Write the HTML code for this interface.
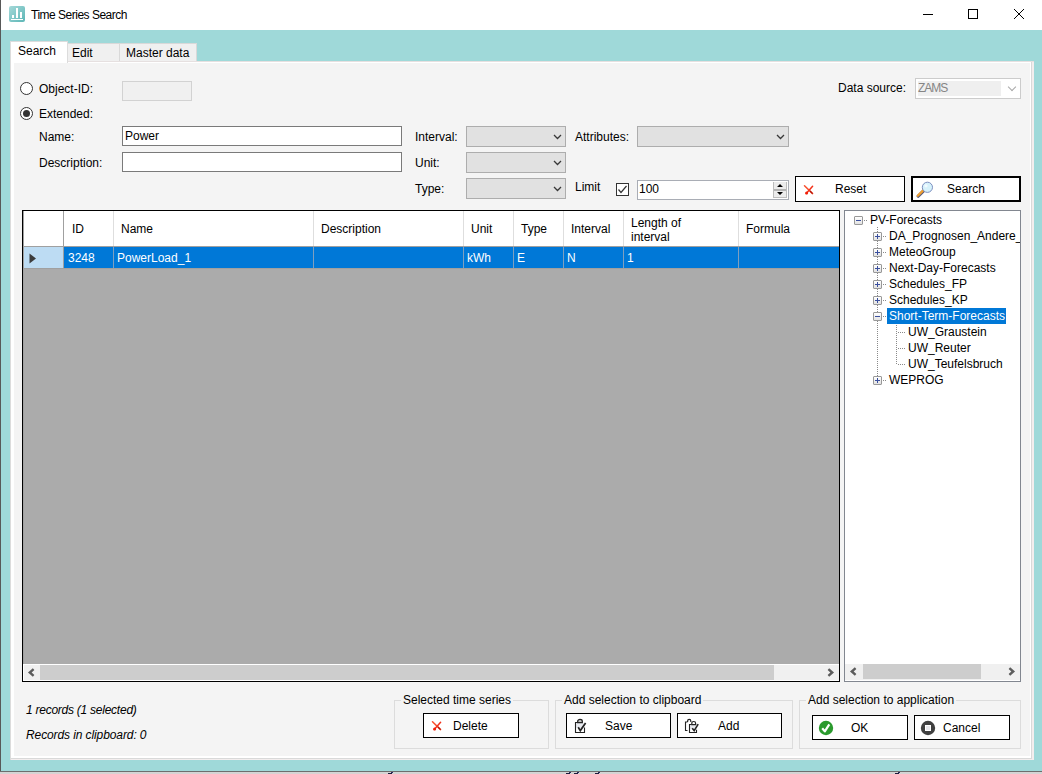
<!DOCTYPE html>
<html><head><meta charset="utf-8">
<style>
*{box-sizing:border-box;margin:0;padding:0}
html,body{width:1042px;height:774px;overflow:hidden}
body{position:relative;background:#9fd9d9;font-family:"Liberation Sans",sans-serif;font-size:12px;color:#000}
.a{position:absolute}
.t{position:absolute;white-space:nowrap;line-height:14px;font-size:12px}
.box{position:absolute;border:1px solid #7a7a7a;background:#fff}
.cmb{position:absolute;border:1px solid #adadad;background:#e1e1e1}
.chev{position:absolute;width:7px;height:7px;border-right:1px solid #5a5a5a;border-bottom:1px solid #5a5a5a;transform:rotate(45deg)}
.btn{position:absolute;border:1px solid #000;background:#fff}
.grp{position:absolute;border:1px solid #dcdcdc}
</style></head><body>

<!-- title bar -->
<div class="a" style="left:0;top:0;width:1042px;height:30px;background:#fff"></div>
<div class="a" style="left:0;top:0;width:1px;height:772px;background:#585858"></div>
<div class="a" style="left:9px;top:6px;width:16px;height:16px;border-radius:2px;background:linear-gradient(135deg,#a6d9d9,#5cb6b6)"></div>
<div class="a" style="left:12px;top:15px;width:2px;height:3px;background:#fff"></div>
<div class="a" style="left:16px;top:8px;width:2px;height:10px;background:#fff"></div>
<div class="a" style="left:20px;top:12px;width:2px;height:6px;background:#fff"></div>
<div class="a" style="left:11px;top:19px;width:12px;height:1px;background:#fff"></div>
<div class="t" style="left:31px;top:8px;letter-spacing:-0.5px">Time Series Search</div>
<div class="a" style="left:923px;top:14px;width:10px;height:1px;background:#000"></div>
<div class="a" style="left:968px;top:9px;width:10px;height:10px;border:1px solid #000"></div>
<svg class="a" style="left:1013px;top:8px" width="12" height="12"><path d="M1 1L11 11M11 1L1 11" stroke="#000" stroke-width="1"/></svg>

<!-- bottom edge -->
<div class="a" style="left:0;top:771px;width:1042px;height:1px;background:#6e6e6e"></div>
<div class="a" style="left:0;top:772px;width:1042px;height:2px;background:#d4d4d4"></div>

<!-- tabs -->
<div class="a" style="left:67px;top:43px;width:53px;height:19px;background:#f0f0f0;border:1px solid #d9d9d9;border-bottom:none"></div>
<div class="a" style="left:119px;top:43px;width:78px;height:19px;background:#f0f0f0;border:1px solid #d9d9d9;border-bottom:none"></div>
<div class="t" style="left:72px;top:46px">Edit</div>
<div class="t" style="left:126px;top:46px">Master data</div>

<!-- panel -->
<div class="a" style="left:10px;top:61px;width:1024px;height:699px;background:#f3eeee;border-top:1px solid #e6e0e0;border-left:1px solid #dcdcdc"></div>
<div class="a" style="left:11px;top:62px;width:1021px;height:697px;background:#d9d9d9"></div>
<div class="a" style="left:11px;top:62px;width:1020px;height:696px;background:#fff"></div>
<div class="a" style="left:14px;top:63px;width:1016px;height:693px;background:#f4f4f4"></div>
<!-- selected tab -->
<div class="a" style="left:10px;top:41px;width:58px;height:22px;background:#fff;border:1px solid #dcdcdc;border-bottom:none"></div>
<div class="t" style="left:18px;top:44px">Search</div>


<!-- form -->
<div class="a" style="left:20px;top:82px;width:13px;height:13px;border:1px solid #333;border-radius:50%;background:#fff"></div>
<div class="t" style="left:39px;top:82px">Object-ID:</div>
<div class="a" style="left:122px;top:81px;width:70px;height:20px;border:1px solid #d2d2d2;background:#f0f0f0"></div>
<div class="a" style="left:20px;top:107px;width:13px;height:13px;border:1px solid #333;border-radius:50%;background:#fff"></div>
<div class="a" style="left:23px;top:110px;width:7px;height:7px;border-radius:50%;background:#333"></div>
<div class="t" style="left:39px;top:107px">Extended:</div>
<div class="t" style="left:39px;top:130px">Name:</div>
<div class="box" style="left:122px;top:126px;width:280px;height:20px"></div>
<div class="t" style="left:125px;top:129px">Power</div>
<div class="t" style="left:39px;top:156px">Description:</div>
<div class="box" style="left:122px;top:152px;width:280px;height:20px"></div>

<div class="t" style="left:415px;top:130px">Interval:</div>
<div class="cmb" style="left:466px;top:126px;width:100px;height:21px"></div>
<svg class="a" style="left:553px;top:134px" width="10" height="6"><path d="M1 1L4.5 4.5L8 1" fill="none" stroke="#383838" stroke-width="1.3"/></svg>
<div class="t" style="left:415px;top:156px">Unit:</div>
<div class="cmb" style="left:466px;top:152px;width:100px;height:21px"></div>
<svg class="a" style="left:553px;top:160px" width="10" height="6"><path d="M1 1L4.5 4.5L8 1" fill="none" stroke="#383838" stroke-width="1.3"/></svg>
<div class="t" style="left:415px;top:182px">Type:</div>
<div class="cmb" style="left:466px;top:178px;width:100px;height:21px"></div>
<svg class="a" style="left:553px;top:186px" width="10" height="6"><path d="M1 1L4.5 4.5L8 1" fill="none" stroke="#383838" stroke-width="1.3"/></svg>

<div class="t" style="left:575px;top:130px">Attributes:</div>
<div class="cmb" style="left:637px;top:126px;width:152px;height:21px"></div>
<svg class="a" style="left:776px;top:134px" width="10" height="6"><path d="M1 1L4.5 4.5L8 1" fill="none" stroke="#383838" stroke-width="1.3"/></svg>
<div class="t" style="left:575px;top:180px">Limit</div>
<div class="a" style="left:616px;top:183px;width:13px;height:13px;border:1px solid #333;background:#fff"></div>
<svg class="a" style="left:616px;top:183px" width="13" height="13"><path d="M2.5 6.5L5 9.5L10.5 3" fill="none" stroke="#333" stroke-width="1.2"/></svg>
<div class="a" style="left:637px;top:180px;width:152px;height:20px;border:1px solid #a9adb5;background:#fff"></div>
<div class="t" style="left:639px;top:182px">100</div>
<div class="a" style="left:773px;top:182px;width:14px;height:16px;background:#ececec;border:1px solid #bdbdbd;border-top:none"></div>
<div class="a" style="left:774px;top:189px;width:12px;height:2px;background:#b4b4b4"></div>
<svg class="a" style="left:773px;top:182px" width="14" height="16"><path d="M4 5L7 2L10 5Z M4 10L7 13L10 10Z" fill="#000"/></svg>

<div class="btn" style="left:795px;top:176px;width:110px;height:26px"></div>
<svg class="a" style="left:803px;top:184px" width="12" height="12"><path d="M1.5 1.8L9.6 9.6" stroke="#f8502e" stroke-width="1.5" stroke-linecap="round"/><path d="M9.6 2.3L3.2 9.4" stroke="#f3321a" stroke-width="1.5" stroke-linecap="round"/><circle cx="3.6" cy="9" r="1.5" fill="#f01e08"/><path d="M7 7L9.6 9.6" stroke="#b01208" stroke-width="1.2"/></svg>
<div class="t" style="left:835px;top:182px">Reset</div>
<div class="btn" style="left:911px;top:176px;width:110px;height:26px;border:2px solid #000"></div>
<svg class="a" style="left:916px;top:179px" width="18" height="20"><path d="M7.6 11.8L2.2 17.2" stroke="#5a5a7a" stroke-width="3.2" stroke-linecap="round"/><path d="M7.2 11.4L1.8 16.8" stroke="#f0a030" stroke-width="2.2" stroke-linecap="round"/><circle cx="11.4" cy="8.3" r="5.1" fill="#d6f2fb" stroke="#7d8fc0" stroke-width="1"/><circle cx="10" cy="6.8" r="1.6" fill="#f2fbff"/></svg>
<div class="t" style="left:947px;top:182px">Search</div>

<div class="t" style="left:838px;top:81px">Data source:</div>
<div class="a" style="left:915px;top:78px;width:106px;height:21px;border:1px solid #cccccc;background:#fff"></div>
<div class="a" style="left:918px;top:81px;width:83px;height:15px;background:#efefef"></div>
<div class="t" style="left:918px;top:81px;color:#858585;letter-spacing:-1px">ZAMS</div>
<div class="chev" style="left:1009px;top:84px;width:6px;height:6px;border-color:#a8a8a8"></div>


<!-- grid -->
<div class="a" style="left:22px;top:210px;width:818px;height:472px;border:1px solid #000;background:#ababab"></div>
<div class="a" style="left:23px;top:211px;width:816px;height:35px;background:#fff"></div>
<div class="a" style="left:23px;top:246px;width:816px;height:1px;background:#a0a0a0"></div>
<div class="a" style="left:24px;top:247px;width:39px;height:21px;background:#bddcf3"></div>
<div class="a" style="left:64px;top:247px;width:775px;height:21px;background:#0078d7"></div>
<div class="a" style="left:23px;top:268px;width:816px;height:1px;background:#a0a0a0"></div>
<div class="a" style="left:23px;top:211px;width:1px;height:453px;background:#a0a0a0"></div>
<div class="a" style="left:63px;top:211px;width:1px;height:57px;background:#a0a0a0"></div>
<div class="a" style="left:113px;top:211px;width:1px;height:35px;background:#dedede"></div>
<div class="a" style="left:113px;top:247px;width:1px;height:21px;background:#7f9fbf"></div>
<div class="a" style="left:313px;top:211px;width:1px;height:35px;background:#dedede"></div>
<div class="a" style="left:313px;top:247px;width:1px;height:21px;background:#7f9fbf"></div>
<div class="a" style="left:463px;top:211px;width:1px;height:35px;background:#dedede"></div>
<div class="a" style="left:463px;top:247px;width:1px;height:21px;background:#7f9fbf"></div>
<div class="a" style="left:513px;top:211px;width:1px;height:35px;background:#dedede"></div>
<div class="a" style="left:513px;top:247px;width:1px;height:21px;background:#7f9fbf"></div>
<div class="a" style="left:563px;top:211px;width:1px;height:35px;background:#dedede"></div>
<div class="a" style="left:563px;top:247px;width:1px;height:21px;background:#7f9fbf"></div>
<div class="a" style="left:623px;top:211px;width:1px;height:35px;background:#dedede"></div>
<div class="a" style="left:623px;top:247px;width:1px;height:21px;background:#7f9fbf"></div>
<div class="a" style="left:738px;top:211px;width:1px;height:35px;background:#dedede"></div>
<div class="a" style="left:738px;top:247px;width:1px;height:21px;background:#7f9fbf"></div>
<svg class="a" style="left:29px;top:253px" width="8" height="11"><path d="M0.5 0.5L7 5.5L0.5 10.5Z" fill="#3c3c3c"/></svg>
<div class="t" style="left:72px;top:222px">ID</div>
<div class="t" style="left:121px;top:222px">Name</div>
<div class="t" style="left:321px;top:222px">Description</div>
<div class="t" style="left:471px;top:222px">Unit</div>
<div class="t" style="left:521px;top:222px">Type</div>
<div class="t" style="left:571px;top:222px">Interval</div>
<div class="t" style="left:631px;top:216px">Length of</div>
<div class="t" style="left:631px;top:230px">interval</div>
<div class="t" style="left:746px;top:222px">Formula</div>
<div class="t" style="left:68px;top:251px;color:#fff">3248</div>
<div class="t" style="left:117px;top:251px;color:#fff">PowerLoad_1</div>
<div class="t" style="left:467px;top:251px;color:#fff">kWh</div>
<div class="t" style="left:517px;top:251px;color:#fff">E</div>
<div class="t" style="left:567px;top:251px;color:#fff">N</div>
<div class="t" style="left:627px;top:251px;color:#fff">1</div>
<!-- grid hscroll -->
<div class="a" style="left:23px;top:664px;width:816px;height:17px;background:#fff"></div>
<div class="a" style="left:24px;top:665px;width:815px;height:15px;background:#f0f0f0"></div>
<div class="a" style="left:40px;top:665px;width:734px;height:15px;background:#cdcdcd"></div>
<svg class="a" style="left:26px;top:666px" width="12" height="13"><path d="M7.6 3.2L3.8 6.5L7.6 9.8" fill="none" stroke="#5c5c5c" stroke-width="2.4"/></svg>
<svg class="a" style="left:824px;top:666px" width="12" height="13"><path d="M4.4 3.2L8.2 6.5L4.4 9.8" fill="none" stroke="#5c5c5c" stroke-width="2.4"/></svg>

<!-- tree -->
<div class="a" style="left:844px;top:210px;width:177px;height:472px;border:1px solid #828790;background:#fff"></div>
<div class="a" style="left:845px;top:664px;width:175px;height:16px;background:#f0f0f0"></div>
<div class="a" style="left:863px;top:664px;width:118px;height:15px;background:#cdcdcd"></div>
<svg class="a" style="left:848px;top:665px" width="12" height="13"><path d="M7.6 3.2L3.8 6.5L7.6 9.8" fill="none" stroke="#5c5c5c" stroke-width="2.4"/></svg>
<svg class="a" style="left:1005px;top:665px" width="12" height="13"><path d="M4.4 3.2L8.2 6.5L4.4 9.8" fill="none" stroke="#5c5c5c" stroke-width="2.4"/></svg>


<!-- tree contents -->
<div class="a" style="left:877px;top:227px;width:1px;height:154px;background:repeating-linear-gradient(180deg,#8a8a8a 0 1px,transparent 1px 2px)"></div>
<div class="a" style="left:896px;top:325px;width:1px;height:40px;background:repeating-linear-gradient(180deg,#8a8a8a 0 1px,transparent 1px 2px)"></div>
<div class="a" style="left:854px;top:216px;width:9px;height:9px;border:1px solid #989898;border-radius:1px;background:linear-gradient(180deg,#fff,#e2e2e2)"></div>
<div class="a" style="left:856px;top:220px;width:5px;height:1px;background:#3a4f9e"></div>
<div class="a" style="left:864px;top:220px;width:4px;height:1px;background:repeating-linear-gradient(90deg,#8a8a8a 0 1px,transparent 1px 2px)"></div>
<div class="t" style="left:870px;top:213px">PV-Forecasts</div>
<div class="a" style="left:873px;top:232px;width:9px;height:9px;border:1px solid #989898;border-radius:1px;background:linear-gradient(180deg,#fff,#e2e2e2)"></div>
<div class="a" style="left:875px;top:236px;width:5px;height:1px;background:#3a4f9e"></div>
<div class="a" style="left:877px;top:234px;width:1px;height:5px;background:#3a4f9e"></div>
<div class="a" style="left:883px;top:236px;width:4px;height:1px;background:repeating-linear-gradient(90deg,#8a8a8a 0 1px,transparent 1px 2px)"></div>
<div class="t" style="left:889px;top:229px;width:131px;overflow:hidden">DA_Prognosen_Andere_</div>
<div class="a" style="left:873px;top:248px;width:9px;height:9px;border:1px solid #989898;border-radius:1px;background:linear-gradient(180deg,#fff,#e2e2e2)"></div>
<div class="a" style="left:875px;top:252px;width:5px;height:1px;background:#3a4f9e"></div>
<div class="a" style="left:877px;top:250px;width:1px;height:5px;background:#3a4f9e"></div>
<div class="a" style="left:883px;top:252px;width:4px;height:1px;background:repeating-linear-gradient(90deg,#8a8a8a 0 1px,transparent 1px 2px)"></div>
<div class="t" style="left:889px;top:245px;width:131px;overflow:hidden">MeteoGroup</div>
<div class="a" style="left:873px;top:264px;width:9px;height:9px;border:1px solid #989898;border-radius:1px;background:linear-gradient(180deg,#fff,#e2e2e2)"></div>
<div class="a" style="left:875px;top:268px;width:5px;height:1px;background:#3a4f9e"></div>
<div class="a" style="left:877px;top:266px;width:1px;height:5px;background:#3a4f9e"></div>
<div class="a" style="left:883px;top:268px;width:4px;height:1px;background:repeating-linear-gradient(90deg,#8a8a8a 0 1px,transparent 1px 2px)"></div>
<div class="t" style="left:889px;top:261px;width:131px;overflow:hidden">Next-Day-Forecasts</div>
<div class="a" style="left:873px;top:280px;width:9px;height:9px;border:1px solid #989898;border-radius:1px;background:linear-gradient(180deg,#fff,#e2e2e2)"></div>
<div class="a" style="left:875px;top:284px;width:5px;height:1px;background:#3a4f9e"></div>
<div class="a" style="left:877px;top:282px;width:1px;height:5px;background:#3a4f9e"></div>
<div class="a" style="left:883px;top:284px;width:4px;height:1px;background:repeating-linear-gradient(90deg,#8a8a8a 0 1px,transparent 1px 2px)"></div>
<div class="t" style="left:889px;top:277px;width:131px;overflow:hidden">Schedules_FP</div>
<div class="a" style="left:873px;top:296px;width:9px;height:9px;border:1px solid #989898;border-radius:1px;background:linear-gradient(180deg,#fff,#e2e2e2)"></div>
<div class="a" style="left:875px;top:300px;width:5px;height:1px;background:#3a4f9e"></div>
<div class="a" style="left:877px;top:298px;width:1px;height:5px;background:#3a4f9e"></div>
<div class="a" style="left:883px;top:300px;width:4px;height:1px;background:repeating-linear-gradient(90deg,#8a8a8a 0 1px,transparent 1px 2px)"></div>
<div class="t" style="left:889px;top:293px;width:131px;overflow:hidden">Schedules_KP</div>
<div class="a" style="left:873px;top:312px;width:9px;height:9px;border:1px solid #989898;border-radius:1px;background:linear-gradient(180deg,#fff,#e2e2e2)"></div>
<div class="a" style="left:875px;top:316px;width:5px;height:1px;background:#3a4f9e"></div>
<div class="a" style="left:883px;top:316px;width:4px;height:1px;background:repeating-linear-gradient(90deg,#8a8a8a 0 1px,transparent 1px 2px)"></div>
<div class="a" style="left:887px;top:308px;width:119px;height:16px;background:#0078d7"></div>
<div class="t" style="left:889px;top:309px;color:#fff">Short-Term-Forecasts</div>
<div class="a" style="left:898px;top:332px;width:8px;height:1px;background:repeating-linear-gradient(90deg,#8a8a8a 0 1px,transparent 1px 2px)"></div>
<div class="t" style="left:908px;top:325px">UW_Graustein</div>
<div class="a" style="left:898px;top:348px;width:8px;height:1px;background:repeating-linear-gradient(90deg,#8a8a8a 0 1px,transparent 1px 2px)"></div>
<div class="t" style="left:908px;top:341px">UW_Reuter</div>
<div class="a" style="left:898px;top:364px;width:8px;height:1px;background:repeating-linear-gradient(90deg,#8a8a8a 0 1px,transparent 1px 2px)"></div>
<div class="t" style="left:908px;top:357px">UW_Teufelsbruch</div>
<div class="a" style="left:873px;top:376px;width:9px;height:9px;border:1px solid #989898;border-radius:1px;background:linear-gradient(180deg,#fff,#e2e2e2)"></div>
<div class="a" style="left:875px;top:380px;width:5px;height:1px;background:#3a4f9e"></div>
<div class="a" style="left:877px;top:378px;width:1px;height:5px;background:#3a4f9e"></div>
<div class="a" style="left:883px;top:380px;width:4px;height:1px;background:repeating-linear-gradient(90deg,#8a8a8a 0 1px,transparent 1px 2px)"></div>
<div class="t" style="left:889px;top:373px">WEPROG</div>


<!-- status -->
<div class="t" style="left:26px;top:703px;font-style:italic;letter-spacing:-0.25px">1 records (1 selected)</div>
<div class="t" style="left:26px;top:728px;font-style:italic;letter-spacing:-0.1px">Records in clipboard: 0</div>

<!-- groups -->
<div class="grp" style="left:394px;top:700px;width:155px;height:49px"></div>
<div class="t" style="left:401px;top:693px;padding:0 2px;background:#f4f4f4">Selected time series</div>
<div class="grp" style="left:555px;top:700px;width:238px;height:49px"></div>
<div class="t" style="left:562px;top:693px;padding:0 2px;background:#f4f4f4">Add selection to clipboard</div>
<div class="grp" style="left:799px;top:700px;width:222px;height:49px"></div>
<div class="t" style="left:806px;top:693px;padding:0 2px;background:#f4f4f4">Add selection to application</div>

<div class="btn" style="left:423px;top:713px;width:96px;height:25px"></div>
<svg class="a" style="left:431px;top:720px" width="12" height="12"><path d="M1.5 1.8L9.6 9.6" stroke="#f8502e" stroke-width="1.5" stroke-linecap="round"/><path d="M9.6 2.3L3.2 9.4" stroke="#f3321a" stroke-width="1.5" stroke-linecap="round"/><circle cx="3.6" cy="9" r="1.5" fill="#f01e08"/><path d="M7 7L9.6 9.6" stroke="#b01208" stroke-width="1.2"/></svg>
<div class="t" style="left:453px;top:719px">Delete</div>

<div class="btn" style="left:566px;top:713px;width:105px;height:25px"></div>
<svg class="a" style="left:573px;top:717px" width="16" height="18"><rect x="3" y="6" width="8" height="5" fill="#e9ebf0"/><path d="M2.5 16V5.5H4.6M11.5 10.6V15.5H2.5" fill="none" stroke="#222" stroke-width="1.1"/><path d="M4.7 5.5V4.3A2.3 1.8 0 0 1 9.3 4.3V5.5Z" fill="none" stroke="#222" stroke-width="1.3"/><path d="M5.2 10.2L7.3 13.6L12.6 5.9" fill="none" stroke="#222" stroke-width="1.7"/></svg>
<div class="t" style="left:605px;top:719px">Save</div>

<div class="btn" style="left:677px;top:713px;width:105px;height:25px"></div>
<svg class="a" style="left:684px;top:717px" width="18" height="18"><path d="M3.5 13.5H1.5V5H3.5" fill="none" stroke="#222" stroke-width="1.1"/><path d="M3.6 5V4A1.6 1.6 0 0 1 6.8 4V5" fill="none" stroke="#222" stroke-width="1.2"/><rect x="6" y="8" width="6" height="4" fill="#e9ebf0"/><path d="M7.6 7.5H5.5V15.5H12.5V12.8M11.6 7.5H12.2" fill="none" stroke="#222" stroke-width="1.1"/><path d="M7.8 7.6V6.2A1.9 1.7 0 0 1 11.6 6.2V7.6Z" fill="none" stroke="#222" stroke-width="1.2"/><path d="M8.2 11.3L10.2 13.6L14.2 7.2" fill="none" stroke="#222" stroke-width="1.6"/></svg>
<div class="t" style="left:718px;top:719px">Add</div>

<div class="btn" style="left:812px;top:715px;width:96px;height:25px"></div>
<svg class="a" style="left:818px;top:720px" width="16" height="16"><circle cx="8" cy="8" r="7.2" fill="#2b9a2e"/><path d="M4.2 8.3L6.8 11.3L11.3 4.4" fill="none" stroke="#fff" stroke-width="2.2" stroke-linejoin="round"/></svg>
<div class="t" style="left:851px;top:721px">OK</div>

<div class="btn" style="left:914px;top:715px;width:96px;height:25px"></div>
<svg class="a" style="left:920px;top:720px" width="16" height="16"><circle cx="8" cy="8" r="7.2" fill="#404040"/><rect x="5.5" y="5.5" width="5" height="5" fill="#e8e8ec" stroke="#fff" stroke-width="1"/></svg>
<div class="t" style="left:943px;top:721px">Cancel</div>

<!-- bottom marks -->
<div class="a" style="left:388px;top:773px;width:4px;height:1px;background:#1c1c3c"></div><div class="a" style="left:391px;top:772px;width:2px;height:1px;background:#2a2a60"></div>
<div class="a" style="left:566px;top:773px;width:4px;height:1px;background:#1c1c3c"></div><div class="a" style="left:569px;top:772px;width:2px;height:1px;background:#2a2a60"></div>
<div class="a" style="left:574px;top:773px;width:4px;height:1px;background:#1c1c3c"></div><div class="a" style="left:577px;top:772px;width:2px;height:1px;background:#2a2a60"></div>
<div class="a" style="left:595px;top:773px;width:4px;height:1px;background:#1c1c3c"></div><div class="a" style="left:598px;top:772px;width:2px;height:1px;background:#2a2a60"></div>
<div class="a" style="left:895px;top:773px;width:4px;height:1px;background:#1c1c3c"></div><div class="a" style="left:898px;top:772px;width:2px;height:1px;background:#2a2a60"></div>
</body></html>
